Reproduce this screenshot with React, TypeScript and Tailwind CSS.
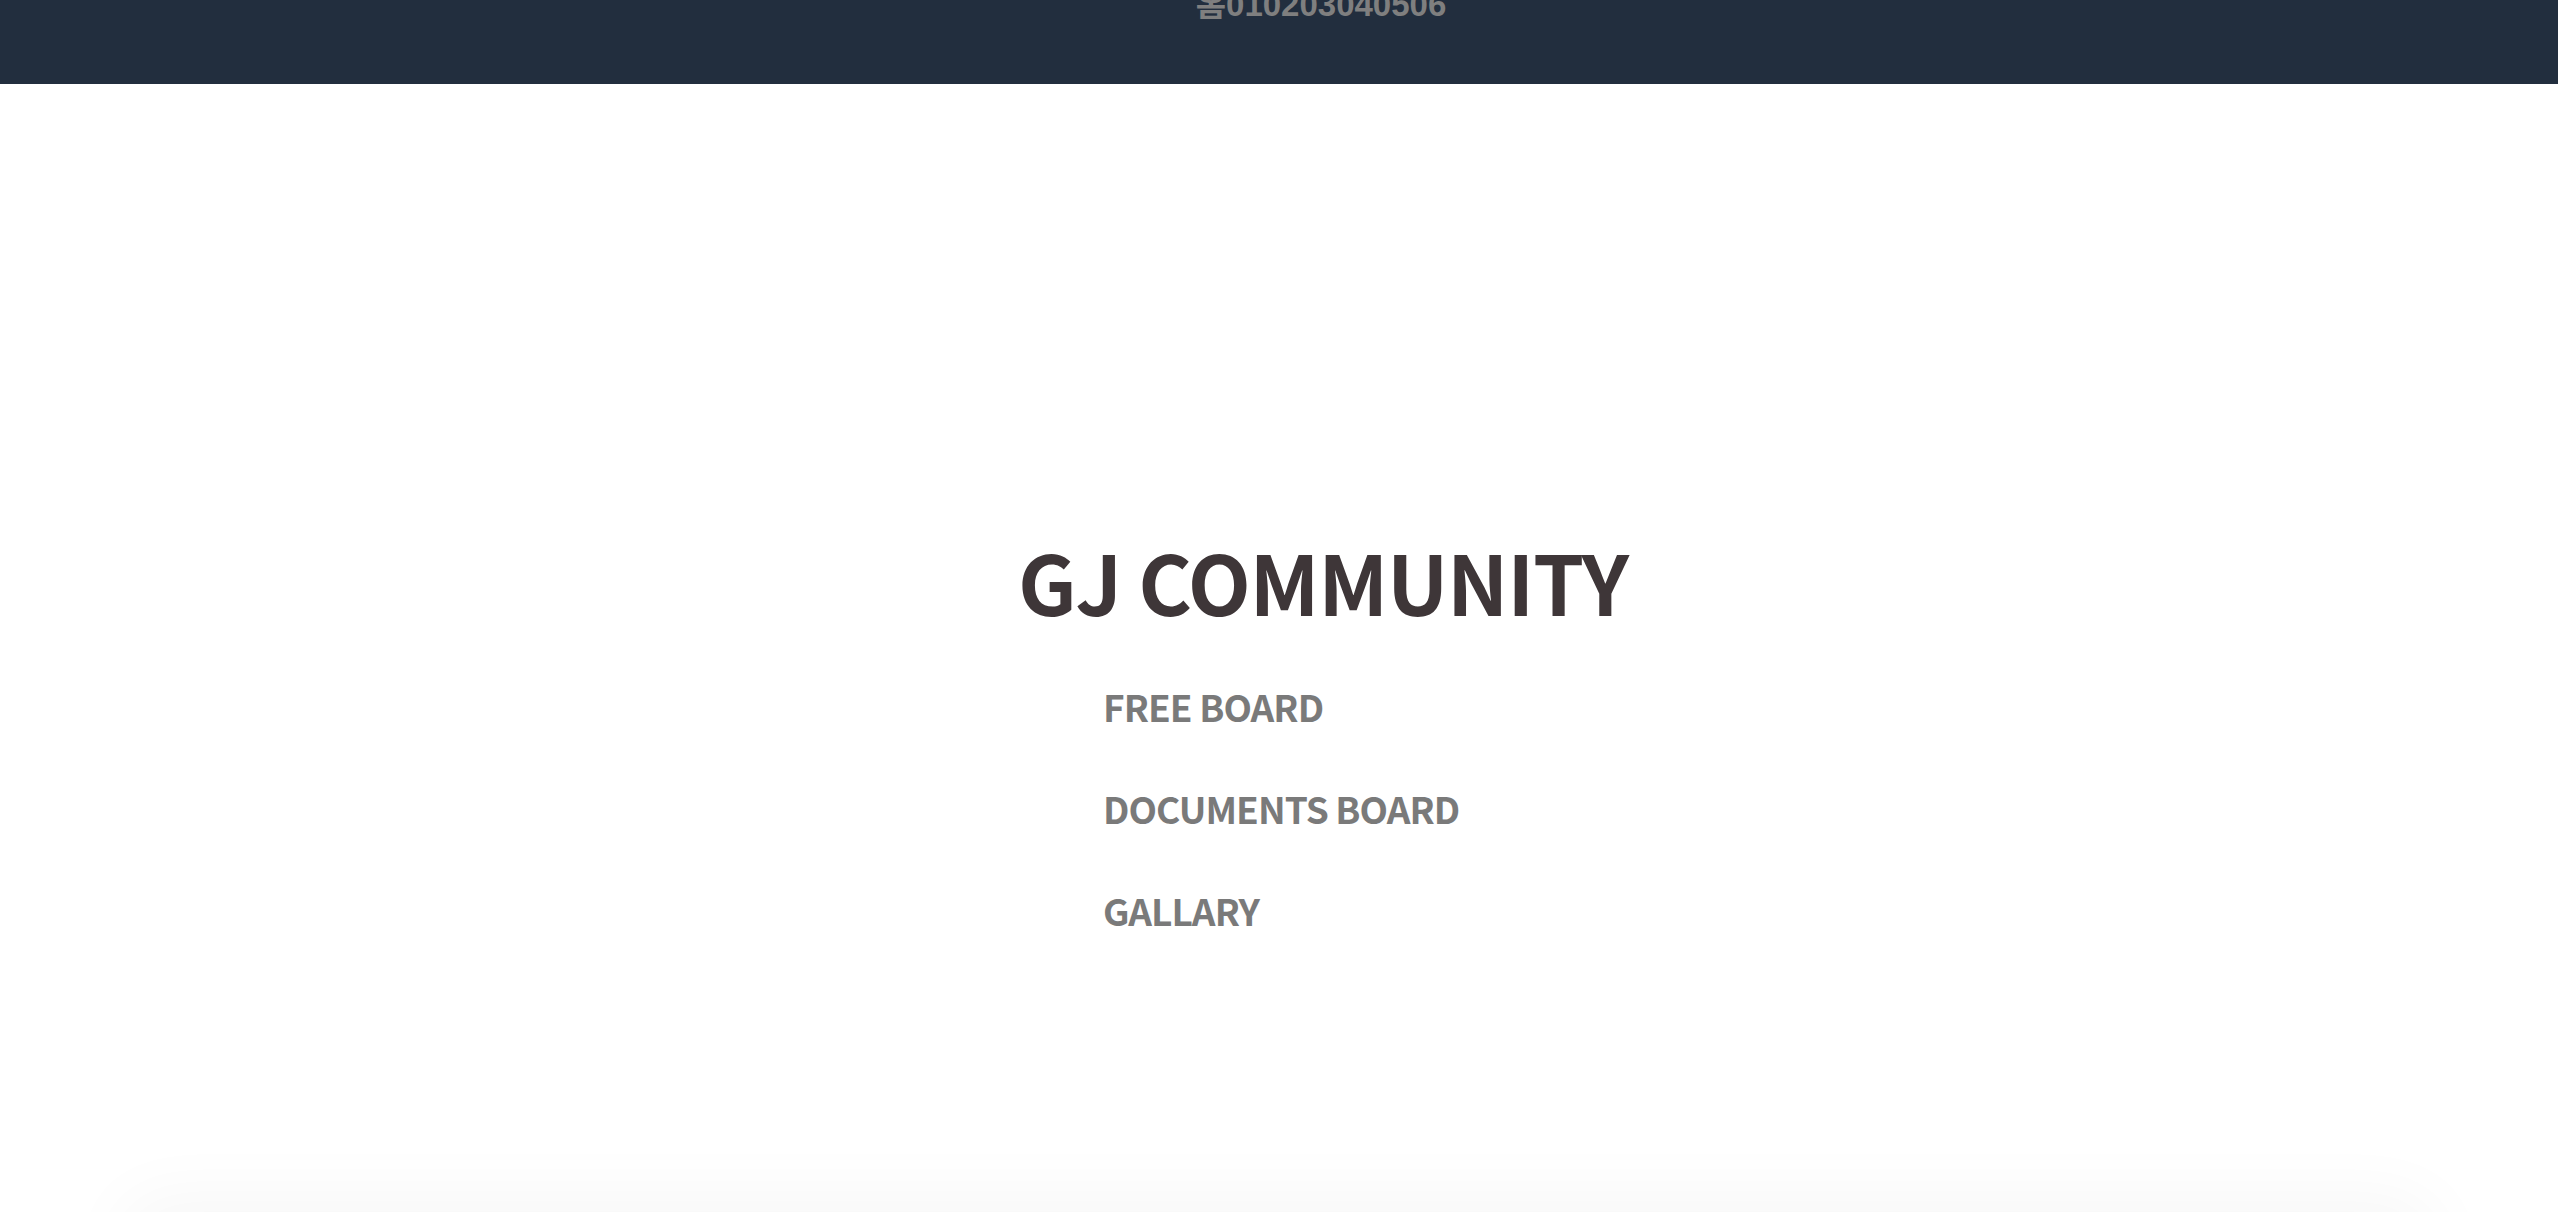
import React from "react";

const MENU = ["FREE BOARD", "DOCUMENTS BOARD", "GALLARY"];

export default function App() {
  return (
    <div className="relative h-[1212px] overflow-hidden bg-white font-['Noto_Sans_CJK_KR',sans-serif]">
      {/* Top bar */}
      <header className="h-[84px] bg-[#222e3e]">
        <div className="flex justify-center pl-[84px]">
          <span className="-mt-[12px] font-['Liberation_Sans','Noto_Sans_CJK_KR',sans-serif] text-[33px] font-bold leading-none text-[#7f7f7f]">
            홈010203040506
          </span>
        </div>
      </header>

      {/* Community menu */}
      <main className="h-[1128px] pt-[456px]">
        <div className="mx-auto w-[528px]">
          <h1 className="whitespace-nowrap pl-[3px] text-[82px] font-bold leading-none tracking-[-0.015em] text-[#3e3638]">
            GJ COMMUNITY
          </h1>
          <ul className="mt-[66px] flex flex-col gap-[63px] pl-[88px]">
            {MENU.map((item) => (
              <li key={item}>
                <a href="#" className="whitespace-nowrap text-[37px] font-bold leading-none tracking-tight text-[#7a7a7a]">
                  {item}
                </a>
              </li>
            ))}
          </ul>
        </div>
      </main>

      {/* Next section peeking in */}
      <section className="mx-[120px] h-[400px] rounded-[40px] bg-white shadow-[0_-16px_70px_rgba(0,0,0,0.035)]" />
    </div>
  );
}
